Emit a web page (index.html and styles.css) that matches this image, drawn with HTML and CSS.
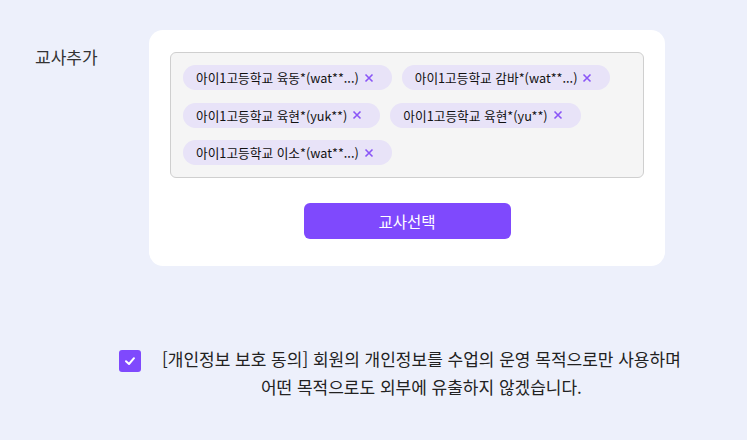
FILE: index.html
```html
<!DOCTYPE html>
<html lang="ko">
<head>
<meta charset="utf-8">
<link rel="stylesheet" href="styles.css">
</head>
<body>
<div class="page">
  <div class="row">
    <div class="label">교사추가</div>
    <div class="card">
      <div class="chips">
        <span class="chip">아이1고등학교 육동*(wat**...)<span class="x"><svg width="10" height="10" viewBox="0 0 10 10"><path d="M1.5 1.5 L8.5 8.5 M8.5 1.5 L1.5 8.5" stroke="currentColor" stroke-width="1.6" fill="none"/></svg></span></span>
        <span class="chip">아이1고등학교 감바*(wat**...)<span class="x"><svg width="10" height="10" viewBox="0 0 10 10"><path d="M1.5 1.5 L8.5 8.5 M8.5 1.5 L1.5 8.5" stroke="currentColor" stroke-width="1.6" fill="none"/></svg></span></span>
        <span class="chip">아이1고등학교 육현*(yuk**)<span class="x"><svg width="10" height="10" viewBox="0 0 10 10"><path d="M1.5 1.5 L8.5 8.5 M8.5 1.5 L1.5 8.5" stroke="currentColor" stroke-width="1.6" fill="none"/></svg></span></span>
        <span class="chip">아이1고등학교 육현*(yu**)<span class="x"><svg width="10" height="10" viewBox="0 0 10 10"><path d="M1.5 1.5 L8.5 8.5 M8.5 1.5 L1.5 8.5" stroke="currentColor" stroke-width="1.6" fill="none"/></svg></span></span>
        <span class="chip">아이1고등학교 이소*(wat**...)<span class="x"><svg width="10" height="10" viewBox="0 0 10 10"><path d="M1.5 1.5 L8.5 8.5 M8.5 1.5 L1.5 8.5" stroke="currentColor" stroke-width="1.6" fill="none"/></svg></span></span>
      </div>
      <button class="btn">교사선택</button>
    </div>
  </div>
  <div class="agree">
    <span class="check"><svg width="14" height="14" viewBox="0 0 14 14"><path d="M3 7.2 L6 10 L11 4.2" stroke="#fff" stroke-width="2" fill="none" stroke-linecap="round" stroke-linejoin="round"/></svg></span>
    <p class="agree-text">[개인정보 보호 동의] 회원의 개인정보를 수업의 운영 목적으로만 사용하며<br>어떤 목적으로도 외부에 유출하지 않겠습니다.</p>
  </div>
</div>
</body>
</html>
```
FILE: styles.css
```css
html, body {
  margin: 0;
  padding: 0;
  background: #edf0fb;
  font-family: "Noto Sans CJK KR", "Noto Sans", sans-serif;
  color: #222;
}
.page {
  padding: 30px 0 0 35px;
  width: 747px;
  height: 440px;
  box-sizing: border-box;
}
.row {
  display: flex;
  align-items: flex-start;
}
.label {
  width: 114px;
  font-size: 17px;
  line-height: 20px;
  margin-top: 17px;
  color: #333;
}
.card {
  width: 516px;
  box-sizing: border-box;
  background: #fff;
  border-radius: 14px;
  padding: 22px 21px 27px 21px;
  display: flex;
  flex-direction: column;
  align-items: center;
}
.chips {
  width: 474px;
  height: 126px;
  box-sizing: border-box;
  border: 1px solid #cfcfcf;
  border-radius: 6px;
  background: #f5f5f5;
  padding: 12px 12px;
  display: flex;
  flex-wrap: wrap;
  align-content: flex-start;
  column-gap: 10px;
  row-gap: 12.5px;
}
.chip {
  display: inline-flex;
  align-items: center;
  height: 25px;
  padding: 0 18px 0 13px;
  border-radius: 13px;
  background: #e8e3f8;
  font-size: 12.7px;
  color: #111;
  white-space: nowrap;
}
.x {
  display: inline-flex;
  margin-left: 5px;
  color: #8a55f7;
}
.btn {
  margin-top: 25px;
  width: 207px;
  height: 36px;
  border: none;
  border-radius: 6px;
  background: #7f49fd;
  color: #fff;
  font-family: inherit;
  font-size: 15.5px;
  padding: 0;
}
.agree {
  display: flex;
  align-items: flex-start;
  margin-top: 84px;
  margin-left: 84px;
}
.check {
  width: 22px;
  height: 22px;
  border-radius: 3px;
  background: #7f49fd;
  display: inline-flex;
  align-items: center;
  justify-content: center;
  flex-shrink: 0;
}
.agree-text {
  margin: -5px 0 0 21px;
  font-size: 17px;
  line-height: 28px;
  text-align: center;
  color: #222;
}
```
